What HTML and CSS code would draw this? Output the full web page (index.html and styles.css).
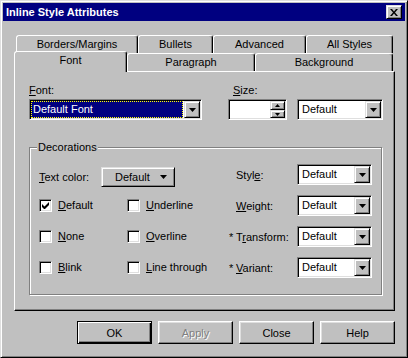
FILE: index.html
```html
<!DOCTYPE html>
<html lang="en">
<head>
  <meta charset="UTF-8">
  <title>Inline Style Attributes</title>
  <link rel="stylesheet" href="styles.css">
</head>
<body>
  <div class="window">
    <div class="titlebar">
      <span class="title">Inline Style Attributes</span>
      <div class="close-btn">
        <svg width="8" height="7" viewBox="0 0 8 7"><path d="M0 0h2l2 2.5L6 0h2L5 3.5L8 7H6L4 4.5L2 7H0l3-3.5z" fill="#000"/></svg>
      </div>
    </div>

    <div class="dialog">
      <!-- tab strip, two rows -->
      <div class="tabs">
        <div class="tab-row">
          <div class="tab t-borders">Borders/Margins</div>
          <div class="tab t-bullets">Bullets</div>
          <div class="tab t-advanced">Advanced</div>
          <div class="tab t-all">All Styles</div>
        </div>
        <div class="tab-row">
          <div class="tab active t-font">Font</div>
          <div class="tab t-para">Paragraph</div>
          <div class="tab t-bg">Background</div>
        </div>
      </div>

      <div class="panel">
        <div class="font-row">
          <div class="field-font">
            <label class="lbl"><u>F</u>ont:</label>
            <div class="combo">
              <div class="combo-sel">Default Font</div>
              <div class="drop"><svg width="7" height="4" viewBox="0 0 7 4"><path d="M0 0h7L3.5 4z" fill="#000"/></svg></div>
            </div>
          </div>
          <div class="field-size">
            <label class="lbl lbl-size"><u>S</u>ize:</label>
            <div class="size-controls">
              <div class="spin">
                <div class="spin-btns">
                  <div class="spin-btn up"><svg width="5" height="3" viewBox="0 0 5 3"><path d="M0 3h5L2.5 0z" fill="#000"/></svg></div>
                  <div class="spin-btn down"><svg width="5" height="3" viewBox="0 0 5 3"><path d="M0 0h5L2.5 3z" fill="#000"/></svg></div>
                </div>
              </div>
              <div class="combo combo-size">
                <div class="combo-text">Default</div>
                <div class="drop"><svg width="7" height="4" viewBox="0 0 7 4"><path d="M0 0h7L3.5 4z" fill="#000"/></svg></div>
              </div>
            </div>
          </div>
        </div>

        <!-- Decorations group -->
        <div class="group">
          <span class="legend">Decorations</span>
          <div class="group-body">
            <div class="left-col">
              <div class="color-row">
                <span class="color-lbl"><u>T</u>ext color:</span>
                <div class="color-btn">
                  <span>Default</span>
                  <svg width="7" height="4" viewBox="0 0 7 4"><path d="M0 0h7L3.5 4z" fill="#000"/></svg>
                </div>
              </div>
              <div class="checks">
                <div class="check">
                  <span class="box"><svg width="7" height="7" viewBox="0 0 7 7"><path d="M0 2v3l2 2h1l4-4V0L2.5 4.5z" fill="#000"/></svg></span>
                  <span><u>D</u>efault</span>
                </div>
                <div class="check"><span class="box"></span><span><u>U</u>nderline</span></div>
                <div class="check"><span class="box"></span><span><u>N</u>one</span></div>
                <div class="check"><span class="box"></span><span><u>O</u>verline</span></div>
                <div class="check"><span class="box"></span><span><u>B</u>link</span></div>
                <div class="check"><span class="box"></span><span><u>L</u>ine through</span></div>
              </div>
            </div>

            <div class="right-col">
              <span class="rlbl">Styl<u>e</u>:</span>
              <div class="combo">
                <div class="combo-text">Default</div>
                <div class="drop"><svg width="7" height="4" viewBox="0 0 7 4"><path d="M0 0h7L3.5 4z" fill="#000"/></svg></div>
              </div>
              <span class="rlbl"><u>W</u>eight:</span>
              <div class="combo">
                <div class="combo-text">Default</div>
                <div class="drop"><svg width="7" height="4" viewBox="0 0 7 4"><path d="M0 0h7L3.5 4z" fill="#000"/></svg></div>
              </div>
              <span class="rlbl"><span class="star">*</span>T<u>r</u>ansform:</span>
              <div class="combo">
                <div class="combo-text">Default</div>
                <div class="drop"><svg width="7" height="4" viewBox="0 0 7 4"><path d="M0 0h7L3.5 4z" fill="#000"/></svg></div>
              </div>
              <span class="rlbl"><span class="star">*</span><u>V</u>ariant:</span>
              <div class="combo">
                <div class="combo-text">Default</div>
                <div class="drop"><svg width="7" height="4" viewBox="0 0 7 4"><path d="M0 0h7L3.5 4z" fill="#000"/></svg></div>
              </div>
            </div>
          </div>
        </div>
      </div>

      <div class="buttons">
        <button class="btn default">OK</button>
        <button class="btn disabled">Apply</button>
        <button class="btn">Close</button>
        <button class="btn">Help</button>
      </div>
    </div>
  </div>
</body>
</html>
```

FILE: styles.css
```css
html, body {
  margin: 0;
  padding: 0;
  background: #c0c0c0;
}
body {
  font-family: "Liberation Sans", Arial, sans-serif;
  font-size: 11px;
  color: #000;
}
.window {
  width: 408px;
  height: 358px;
  box-sizing: border-box;
  border: 1px solid;
  border-color: #dfdfdf #000 #000 #dfdfdf;
  box-shadow: inset 1px 1px #fff, inset -1px -1px #808080;
  padding: 2px;
  background: #c0c0c0;
}
.titlebar {
  height: 18px;
  background: #000080;
  display: flex;
  align-items: center;
  padding: 0 3px;
}
.title {
  flex: 1;
  color: #fff;
  font-weight: bold;
}
.close-btn {
  width: 16px;
  height: 14px;
  box-sizing: border-box;
  border: 1px solid;
  border-color: #dfdfdf #000 #000 #dfdfdf;
  box-shadow: inset 1px 1px #fff, inset -1px -1px #808080;
  background: #c0c0c0;
  display: flex;
  align-items: center;
  justify-content: center;
}
.dialog {
  padding: 14px 10px 11px 11px;
}

/* tabs */
.tabs {
  margin: 0 2px;
}
.tab-row {
  display: flex;
  height: 18px;
  align-items: flex-start;
}
.tab {
  box-sizing: border-box;
  height: 18px;
  border: 1px solid;
  border-bottom: none;
  border-color: #fff #000 transparent #fff;
  border-radius: 3px 3px 0 0;
  box-shadow: inset -1px 0 #808080;
  background: #c0c0c0;
  text-align: center;
  line-height: 17px;
}
.t-borders { width: 122px; }
.t-bullets { width: 75px; }
.t-advanced { width: 93px; }
.t-all { width: 87px; }
.t-font { width: 113px; }
.t-para { width: 128px; }
.t-bg { width: 138px; }
.tab.active {
  height: 21px;
  margin: -2px 0 0 -2px;
  position: relative;
  z-index: 1;
}

.panel {
  height: 240px;
  box-sizing: border-box;
  border: 1px solid;
  border-color: #fff #000 #000 #fff;
  box-shadow: inset -1px -1px #808080;
  padding: 12px 0 0 14px;
}
.font-row {
  display: flex;
}
.lbl {
  display: block;
  line-height: 13px;
  margin-bottom: 2px;
}
.lbl-size {
  margin-left: 5px;
}
.field-font {
  width: 173px;
}
.field-size {
  margin-left: 26px;
}
.size-controls {
  display: flex;
  gap: 10px;
}

/* sunken combo boxes */
.combo, .spin {
  height: 21px;
  box-sizing: border-box;
  border: 1px solid;
  border-color: #808080 #fff #fff #808080;
  box-shadow: inset 1px 1px #000, inset -1px -1px #dfdfdf;
  background: #fff;
  display: flex;
  padding: 1px;
}
.combo-text {
  flex: 1;
  padding-left: 3px;
  line-height: 17px;
}
.combo-sel {
  flex: 1;
  margin-right: 1px;
  background: #000080;
  color: #fff;
  border: 1px dotted #ff0;
  padding-left: 1px;
  line-height: 15px;
}
.combo-size {
  width: 86px;
}
.drop, .spin-btn, .color-btn {
  box-sizing: border-box;
  border: 1px solid;
  border-color: #dfdfdf #000 #000 #dfdfdf;
  box-shadow: inset 1px 1px #fff, inset -1px -1px #808080;
  background: #c0c0c0;
  display: flex;
  align-items: center;
  justify-content: center;
}
.drop {
  width: 16px;
  height: 17px;
}
.spin {
  width: 59px;
  justify-content: flex-end;
}
.spin-btns {
  display: flex;
  flex-direction: column;
  width: 15px;
}
.spin-btn.up { height: 9px; }
.spin-btn.down { height: 8px; }

/* group box */
.group {
  position: relative;
  margin-top: 27px;
  width: 353px;
  height: 148px;
  box-sizing: border-box;
  border: 1px solid #808080;
  box-shadow: inset 1px 1px #fff, 1px 1px #fff;
}
.legend {
  position: absolute;
  top: -7px;
  left: 7px;
  padding: 0 1px;
  line-height: 13px;
  background: #c0c0c0;
}
.group-body {
  display: flex;
  padding: 16px 0 0 9px;
}
.left-col {
  width: 197px;
  margin-top: 3px;
}
.color-row {
  display: flex;
  align-items: center;
  height: 20px;
}
.color-lbl {
  width: 62px;
}
.color-btn {
  width: 74px;
  height: 20px;
  justify-content: flex-start;
  padding-left: 13px;
  gap: 10px;
}
.checks {
  margin-top: 10px;
  display: grid;
  grid-template-columns: 88px 1fr;
  grid-auto-rows: 16px;
  row-gap: 15px;
}
.check {
  display: flex;
  align-items: center;
  gap: 6px;
}
.box {
  width: 13px;
  height: 13px;
  box-sizing: border-box;
  border: 1px solid;
  border-color: #808080 #fff #fff #808080;
  box-shadow: inset 1px 1px #000, inset -1px -1px #dfdfdf;
  background: #fff;
  display: flex;
  align-items: center;
  justify-content: center;
}
.right-col {
  display: grid;
  grid-template-columns: 61px 75px;
  grid-auto-rows: 21px;
  row-gap: 10px;
  align-items: center;
}
.star {
  display: inline-block;
  width: 7px;
  margin-left: -7px;
}

/* bottom buttons */
.buttons {
  display: flex;
  justify-content: flex-end;
  gap: 6px;
  margin-top: 10px;
}
.btn {
  width: 75px;
  height: 23px;
  box-sizing: border-box;
  padding: 0;
  font: inherit;
  color: #000;
  border: 1px solid;
  border-color: #fff #000 #000 #fff;
  box-shadow: inset -1px -1px #808080, inset 1px 1px #dfdfdf;
  background: #c0c0c0;
}
.btn.default {
  border-color: #000;
  box-shadow: inset 1px 1px #fff, inset -1px -1px #000, inset -2px -2px #808080;
}
.btn.disabled {
  color: #808080;
  text-shadow: 1px 1px #fff;
}
```
